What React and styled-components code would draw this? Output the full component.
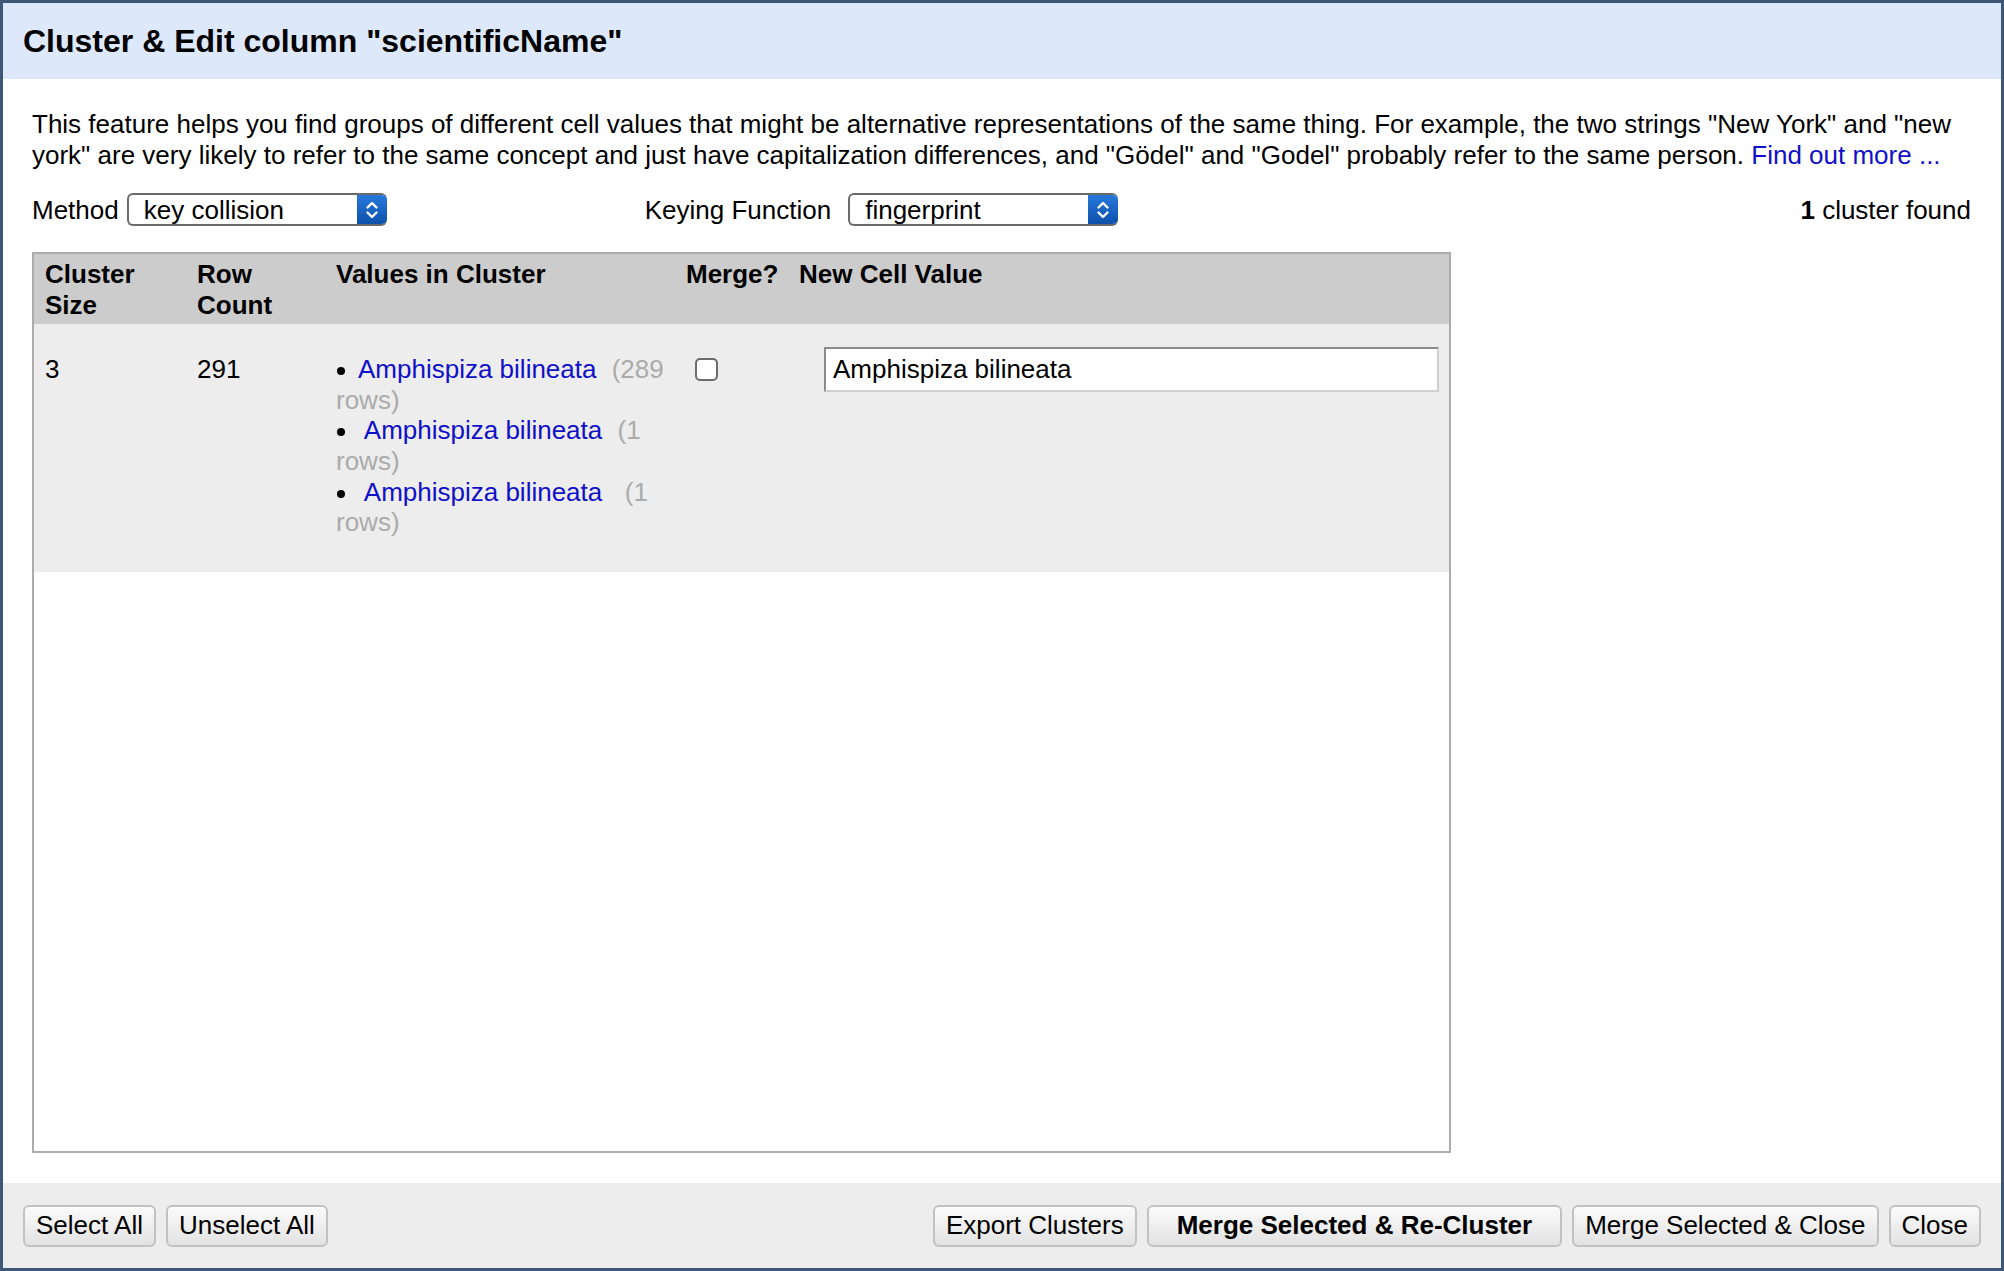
import styled, { createGlobalStyle } from "styled-components";

const GlobalStyle = createGlobalStyle`
  html, body {
    margin: 0;
    padding: 0;
    background: #ffffff;
  }
  body {
    font-family: "Liberation Sans", Arial, sans-serif;
    font-size: 26px;
    color: #000;
  }
`;

const Dialog = styled.div`
  box-sizing: border-box;
  width: 2004px;
  height: 1271px;
  border: 3px solid #3e5776;
  display: flex;
  flex-direction: column;
  background: #fff;
`;

const Header = styled.div`
  height: 76px;
  flex-shrink: 0;
  background: #dde9fa;
  display: flex;
  align-items: center;
  padding: 0 20px;
  font-size: 32px;
  font-weight: 700;
`;

const Body = styled.div`
  flex: 1;
  min-height: 0;
  display: flex;
  flex-direction: column;
  padding: 30px 30px 30px 29px;
  line-height: 30.7px;
`;

const Intro = styled.p`
  margin: 0;
`;

const Link = styled.a`
  color: #1010c8;
  text-decoration: none;
  white-space: ${({ $pre }) => ($pre ? "pre" : "normal")};
`;

const Controls = styled.div`
  display: flex;
  align-items: center;
  height: 33px;
  margin-top: 23px;
`;

const Field = styled.label`
  display: flex;
  align-items: center;
  gap: ${({ $gap }) => $gap}px;
  margin-left: ${({ $offset }) => $offset || 0}px;
`;

const SelectBox = styled.div`
  box-sizing: border-box;
  width: ${({ $width }) => $width}px;
  height: 33px;
  display: flex;
  border: 2px solid #6a6a6a;
  border-right: none;
  border-radius: 6px;
  overflow: hidden;
  background: #fff;
`;

const SelectValue = styled.span`
  flex: 1;
  display: flex;
  align-items: center;
  padding-left: ${({ $pad }) => $pad}px;
  line-height: 1;
`;

const SelectArrow = styled.span`
  width: 30px;
  margin-top: -2px;
  margin-bottom: -2px;
  display: flex;
  align-items: center;
  justify-content: center;
  background: linear-gradient(#2a7be0, #0a4ea6);
  border-radius: 0 6px 6px 0;
`;

const Count = styled.div`
  margin-left: auto;
  b {
    font-weight: 700;
  }
`;

const TableWrap = styled.div`
  flex: 1;
  min-height: 0;
  margin-top: 26px;
  width: 1419px;
  box-sizing: border-box;
  border: 2px solid #acacac;
`;

const Table = styled.table`
  width: 100%;
  border-collapse: collapse;
  table-layout: fixed;
`;

const HeadCell = styled.th`
  background: #cccccc;
  text-align: left;
  vertical-align: top;
  font-weight: 700;
  padding: 5px 11px 3px;
  white-space: ${({ $nowrap }) => ($nowrap ? "nowrap" : "normal")};
`;

const Cell = styled.td`
  background: #ededed;
  vertical-align: top;
  padding: ${({ $top }) => $top ?? 30}px 11px 34px;
`;

const Values = styled.ul`
  margin: 0 -6px 0 0;
  padding: 0;
  list-style: none;
`;

const Value = styled.li`
  &::before {
    content: "";
    display: inline-block;
    width: 8px;
    height: 8px;
    border-radius: 50%;
    background: #000;
    margin: 0 13px 0 1px;
    vertical-align: middle;
  }
`;

const Rows = styled.span`
  color: #ababab;
  padding-left: 8px;
  white-space: pre-wrap;
`;

const Check = styled.input`
  appearance: none;
  box-sizing: border-box;
  width: 23px;
  height: 23px;
  margin: 4px 0 0 9px;
  border: 2px solid #6b6b6b;
  border-radius: 5px;
  background: #fff;
  vertical-align: top;
`;

const NewValue = styled.input`
  box-sizing: border-box;
  width: 615px;
  height: 45px;
  margin-left: 25px;
  padding: 0 7px;
  font: inherit;
  color: #000;
  border: 2px solid;
  border-color: #8a8a8a #cfcfcf #cfcfcf #8a8a8a;
  background: #fff;
  outline: none;
`;

const Footer = styled.div`
  height: 85px;
  flex-shrink: 0;
  background: #ededed;
  display: flex;
  align-items: center;
  padding: 0 20px;
  gap: 10px;
`;

const Spacer = styled.div`
  flex: 1;
`;

const Button = styled.button`
  box-sizing: border-box;
  height: 42px;
  padding: 0 ${({ $primary }) => ($primary ? 28 : 11)}px;
  font-family: inherit;
  font-size: 26px;
  font-weight: ${({ $primary }) => ($primary ? 700 : 400)};
  color: #000;
  background: linear-gradient(#fbfbfb, #e2e2e2);
  border: 2px solid #c2c2c2;
  border-radius: 6px;
  white-space: nowrap;
`;

const Chevrons = () => (
  <svg width="16" height="24" viewBox="0 0 16 24" fill="none">
    <path d="M3.5 9.5 L8 5 L12.5 9.5" stroke="#fff" strokeWidth="2.4" strokeLinecap="round" strokeLinejoin="round" />
    <path d="M3.5 14.5 L8 19 L12.5 14.5" stroke="#fff" strokeWidth="2.4" strokeLinecap="round" strokeLinejoin="round" />
  </svg>
);

const Select = ({ value, width, pad }) => (
  <SelectBox $width={width}>
    <SelectValue $pad={pad}>{value}</SelectValue>
    <SelectArrow>
      <Chevrons />
    </SelectArrow>
  </SelectBox>
);

const choices = [
  { name: "Amphispiza bilineata", rows: "(289 rows)" },
  { name: " Amphispiza bilineata", rows: "(1 rows)" },
  { name: " Amphispiza bilineata", rows: " (1 rows)" },
];

export default function App() {
  return (
    <>
      <GlobalStyle />
      <Dialog>
        <Header>Cluster &amp; Edit column "scientificName"</Header>
        <Body>
          <Intro>
            This feature helps you find groups of different cell values that might be alternative
            representations of the same thing. For example, the two strings "New York" and "new
            york" are very likely to refer to the same concept and just have capitalization
            differences, and "Gödel" and "Godel" probably refer to the same person.{" "}
            <Link href="#">Find out more ...</Link>
          </Intro>
          <Controls>
            <Field $gap={8}>
              Method
              <Select value="key collision" width={260} pad={15} />
            </Field>
            <Field $gap={17} $offset={258}>
              Keying Function
              <Select value="fingerprint" width={270} pad={15} />
            </Field>
            <Count>
              <b>1</b> cluster found
            </Count>
          </Controls>
          <TableWrap>
            <Table>
              <colgroup>
                <col style={{ width: 152 }} />
                <col style={{ width: 139 }} />
                <col style={{ width: 350 }} />
                <col style={{ width: 113 }} />
                <col />
              </colgroup>
              <thead>
                <tr>
                  <HeadCell>Cluster Size</HeadCell>
                  <HeadCell>Row Count</HeadCell>
                  <HeadCell>Values in Cluster</HeadCell>
                  <HeadCell $nowrap>Merge?</HeadCell>
                  <HeadCell $nowrap>New Cell Value</HeadCell>
                </tr>
              </thead>
              <tbody>
                <tr>
                  <Cell>3</Cell>
                  <Cell>291</Cell>
                  <Cell>
                    <Values>
                      {choices.map((c, i) => (
                        <Value key={i}>
                          <Link href="#" $pre>
                            {c.name}
                          </Link>{" "}
                          <Rows>{c.rows}</Rows>
                        </Value>
                      ))}
                    </Values>
                  </Cell>
                  <Cell>
                    <Check type="checkbox" />
                  </Cell>
                  <Cell $top={23}>
                    <NewValue defaultValue="Amphispiza bilineata" />
                  </Cell>
                </tr>
              </tbody>
            </Table>
          </TableWrap>
        </Body>
        <Footer>
          <Button>Select All</Button>
          <Button>Unselect All</Button>
          <Spacer />
          <Button>Export Clusters</Button>
          <Button $primary>Merge Selected &amp; Re-Cluster</Button>
          <Button>Merge Selected &amp; Close</Button>
          <Button>Close</Button>
        </Footer>
      </Dialog>
    </>
  );
}
